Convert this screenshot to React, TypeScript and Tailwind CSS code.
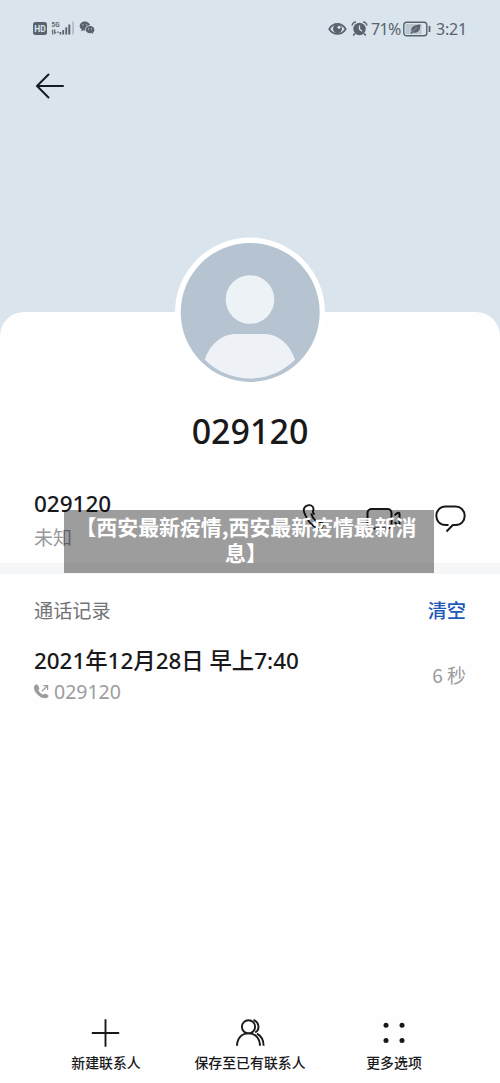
import React from "react";

const StatusBar: React.FC = () => {
  return (
    <div className="flex h-[58px] items-center justify-between pl-[33px] pr-[33px] text-[#59636d]">
      {/* Network indicators */}
      <svg width="64" height="20" viewBox="0 0 64 20" fill="currentColor">
        <rect x="0" y="3" width="14" height="13" rx="2.5" />
        <text x="7" y="12.7" textAnchor="middle" fontSize="8.5" fontWeight="700" fill="#dae4ed" className="font-['Roboto',sans-serif]">HD</text>
        <text x="18.5" y="7.6" fontSize="8" fontWeight="700" textLength="8" lengthAdjust="spacingAndGlyphs" className="font-['Roboto',sans-serif]">5G</text>
        <path d="M18.3 12.2l2-2.2v5.500h-1.200v-3.300zM21.200 10.500h1.200v2.700h1.500l-2.700 2.300zM24.200 12.500h1.500v1.200h-1.500z" />
        <rect x="26.500" y="13" width="1.800" height="2.500" />
        <rect x="29.300" y="11" width="1.800" height="4.500" />
        <rect x="32.300" y="8.300" width="1.900" height="7.200" />
        <rect x="35.300" y="5.500" width="2" height="10" />
        <rect x="39.200" y="2.500" width="1.800" height="13" opacity="0.3" />
        <path d="M52 2.500c-3 0-5.300 2-5.300 4.500 0 1.400.8 2.700 2 3.500l-.6 2 2.200-1.200c.6.2 1.200.2 1.900.2-.5-3 2-5.200 5-5.200C56.700 4.300 54.600 2.500 52 2.500z" />
        <path d="M57.100 7c-2.500 0-4.400 1.600-4.400 3.700s1.900 3.600 4.400 3.600c.6 0 1.100-.1 1.600-.2l1.700.9-.5-1.500c1-.7 1.500-1.600 1.500-2.700 0-2.100-1.900-3.800-4.300-3.800z" />
        <g fill="#dae4ed">
          <circle cx="50" cy="5.800" r=".6" />
          <circle cx="53.700" cy="5.800" r=".6" />
          <circle cx="55.600" cy="9.900" r=".55" />
          <circle cx="58.600" cy="9.900" r=".55" />
        </g>
      </svg>

      {/* Device indicators */}
      <div className="flex items-center">
        <svg width="19" height="18" viewBox="0 0 19 18" fill="none" stroke="currentColor">
          <path d="M1.200 9c4-6.800 12.500-6.800 16.500 0-4 6.600-12.500 6.600-16.500 0z" strokeWidth="1.700" />
          <circle cx="9.500" cy="8.800" r="4.500" fill="currentColor" stroke="none" />
          <circle cx="11" cy="7.300" r="1.500" fill="#dae4ed" stroke="none" />
        </svg>
        <svg className="ml-[4px]" width="17" height="18" viewBox="0 0 17 18" fill="none" stroke="currentColor">
          <circle cx="8.500" cy="9" r="6.200" fill="currentColor" stroke="none" />
          <path d="M3.800 13.500l-1.500 2M13.200 13.500l1.500 2M1.200 5.600C1.200 3.500 3 2 5 2M15.800 5.600C15.800 3.500 14 2 12 2" strokeWidth="1.600" />
          <path d="M8.500 5.500v3.700l2.600 2" stroke="#dae4ed" strokeWidth="1.300" />
        </svg>
        <span className="ml-[3px] w-[32px] font-['Noto_Sans',sans-serif] text-[16px] leading-5 tracking-[-0.7px] whitespace-nowrap">71%</span>
        <svg width="29" height="18" viewBox="0 0 29 18" fill="none">
          <rect x="2.500" y="4" width="16" height="10" fill="#bcc6cf" />
          <rect x=".8" y="2.200" width="23" height="13.600" rx="2.800" stroke="currentColor" strokeWidth="1.400" />
          <path d="M7.500 13.500l1.100-2C7.300 7.300 11 5 17.300 4.600c.2 5.600-2.300 9.300-7.300 7.900L8.500 14z" fill="currentColor" />
          <path d="M9.500 11.500l4.500-4" stroke="#bcc6cf" strokeWidth=".6" />
          <path d="M26.500 6v6" stroke="currentColor" strokeWidth="1.800" />
        </svg>
        <span className="ml-[4px] font-['Noto_Sans',sans-serif] text-[16px] leading-5 tracking-[-0.2px] whitespace-nowrap">3:21</span>
      </div>
    </div>
  );
};

const Avatar: React.FC = () => {
  return (
    <svg className="-mt-[75px] shrink-0" width="150" height="150" viewBox="0 0 150 150">
      <circle cx="75" cy="75.500" r="75" fill="#fff" />
      <circle cx="75.200" cy="75.400" r="69.500" fill="#b6c4d2" />
      <circle cx="75" cy="62.500" r="24.300" fill="#edf2f7" />
      <path d="M29.800 122.700C35 107 47 97 61 97h28c14 0 26 10 31 25.700-25 25-65 25-90.200 0z" fill="#eef1f6" />
    </svg>
  );
};

const ContactRow: React.FC = () => {
  return (
    <div className="relative mt-[33px] flex h-[77px] justify-between px-[34px]">
      <div className="pt-[2px]">
        <div className="font-['Noto_Sans',sans-serif] text-[22.500px] font-medium leading-8 text-[#19191b]">029120</div>
        <div className="mt-px text-[19px] leading-8 text-[#98999b]">未知</div>
      </div>
      <div className="flex items-start gap-9 pt-[17px] text-[#17181a]">
        <svg width="30" height="30" viewBox="0 0 30 30" fill="none" stroke="currentColor" strokeWidth="1.900">
          <path d="M17.500 11.500C14 8.500 17 8 16.500 5.500 16 2 12 1.500 9.500 2.800 6 4.800 6.500 8.500 8 11.500c2.300 5.500 6 10.500 11.500 13.500 3 1.500 5.500.5 6.500-2.500.5-2.500-2.500-4.500-5-3.500" />
          <path d="M14.200 10.500c.8 3.500 2.300 5.500 4.800 7.500" />
        </svg>
        <svg className="overflow-visible" width="36" height="30" viewBox="0 0 36 30" fill="none" stroke="currentColor" strokeWidth="2">
          <rect x="4.500" y="6" width="24" height="19.500" rx="4" />
          <path d="M31.500 12.200l2.800-2c1.300-.7 2.200-.2 2.200 1v9c0 1.200-.9 1.700-2.200 1l-2.800-2" />
        </svg>
        <svg className="-mr-px" width="32" height="30" viewBox="0 0 32 30" fill="none" stroke="currentColor" strokeWidth="2">
          <path d="M17.500 22h3.200c5.400 0 9-4 9-9.200s-4-9.300-9-9.300H10.500c-5.400 0-9.200 4.100-9.200 9.300S5 22 10.500 22h3M17.800 22L11.500 28.500" />
        </svg>
      </div>

      {/* Caption banner over the row */}
      <div className="absolute left-[64px] top-[24px] h-[63px] w-[370px] bg-black/38 pt-[3px] pr-[6px] text-center text-[20.900px] font-bold leading-[26px] whitespace-nowrap text-white">
        【西安最新疫情,西安最新疫情最新消<br />息】
      </div>
    </div>
  );
};

const CallLog: React.FC = () => {
  return (
    <div className="px-[34px] pt-[20px]">
      <div className="flex justify-between text-[19.200px] leading-8">
        <span className="text-[#727375]">通话记录</span>
        <button className="font-medium text-[#1e59b5]">清空</button>
      </div>
      <div className="mt-[19px] flex justify-between">
        <div>
          <div className="font-['Noto_Sans','Noto_Sans_CJK_SC',sans-serif] text-[22.400px] font-medium leading-8 text-[#19191b] whitespace-nowrap">2021年12月28日 早上7:40</div>
          <div className="flex h-[30px] items-center text-[#9b9c9e]">
            <svg width="16" height="16" viewBox="0 0 16 16" fill="currentColor">
              <path d="M.8 1.300C2 .1 3.700.3 4.400 2l.9 2.200c.3.900-.9 1.500-.7 2.200.7 1.700 2.200 3.200 4.100 4 .8.300 1.400-.9 2.300-.7l2.700 1.100c1.300.8.900 2.200-.3 3C7 16.500-3 6 .8 1.300z" />
              <path d="M7.800 7.200L13 2.300M9.300 1.700h4.300v4.200" stroke="currentColor" strokeWidth="1.200" fill="none" />
            </svg>
            <span className="ml-[4px] font-['Noto_Sans',sans-serif] text-[19.500px] leading-[30px]">029120</span>
          </div>
        </div>
        <span className="mt-[14px] text-[19px] leading-8 text-[#9b9c9e] whitespace-nowrap">6 秒</span>
      </div>
    </div>
  );
};

const BottomBar: React.FC = () => {
  return (
    <nav className="mt-auto grid grid-cols-[144px_144px_144px] justify-center pb-[11px] text-[13.900px] font-medium leading-5 text-[#19191b]">
      <button className="flex flex-col items-center gap-[4px] whitespace-nowrap">
        <svg width="30" height="30" viewBox="0 0 30 30" fill="none" stroke="currentColor" strokeWidth="1.900">
          <path d="M14.500 1.300v27.400M.8 15h27.400" />
        </svg>
        新建联系人
      </button>
      <button className="flex flex-col items-center gap-[4px] whitespace-nowrap">
        <svg width="30" height="30" viewBox="0 0 30 30" fill="none" stroke="currentColor" strokeWidth="1.900">
          <circle cx="13.500" cy="8.800" r="6.600" />
          <path d="M2 27.800c0-7.400 4.500-12.400 11.500-12.400s11.500 5 11.500 12.400M18.500 2c5.800 1.800 6.700 9.500 1.700 12.500M22 15.700c4.300 2.300 6.600 6.600 6.600 12.100" />
        </svg>
        保存至已有联系人
      </button>
      <button className="flex flex-col items-center gap-[4px] whitespace-nowrap">
        <svg width="30" height="30" viewBox="0 0 30 30" fill="currentColor">
          <circle cx="7" cy="7.200" r="2.500" />
          <circle cx="23" cy="7.200" r="2.500" />
          <circle cx="7" cy="22.500" r="2.500" />
          <circle cx="23" cy="22.500" r="2.500" />
        </svg>
        更多选项
      </button>
    </nav>
  );
};

const App: React.FC = () => {
  return (
    <div className="flex h-[1083px] w-[500px] flex-col overflow-hidden bg-[#dae4ed] font-['Noto_Sans_CJK_SC',sans-serif]">
      <header className="h-[312px] shrink-0">
        <StatusBar />
        <button className="ml-[35px] mt-[14px] block" aria-label="Back">
          <svg width="30" height="28" viewBox="0 0 30 28" fill="none" stroke="#161c24" strokeWidth="2" strokeLinecap="round">
            <path d="M2 14h26M13.500 2.500L2 14l11.500 11.500" />
          </svg>
        </button>
      </header>
      <main className="flex flex-1 flex-col rounded-t-[24px] bg-[#fefefe]">
        <div className="flex flex-col items-center">
          <Avatar />
          <h1 className="mt-[22px] font-['Noto_Sans',sans-serif] text-[34px] font-medium leading-[44px] text-[#19191b]">029120</h1>
        </div>
        <ContactRow />
        <div className="h-[11px] shrink-0 bg-[#f5f6f7]" />
        <CallLog />
        <BottomBar />
      </main>
    </div>
  );
};

export default App;
